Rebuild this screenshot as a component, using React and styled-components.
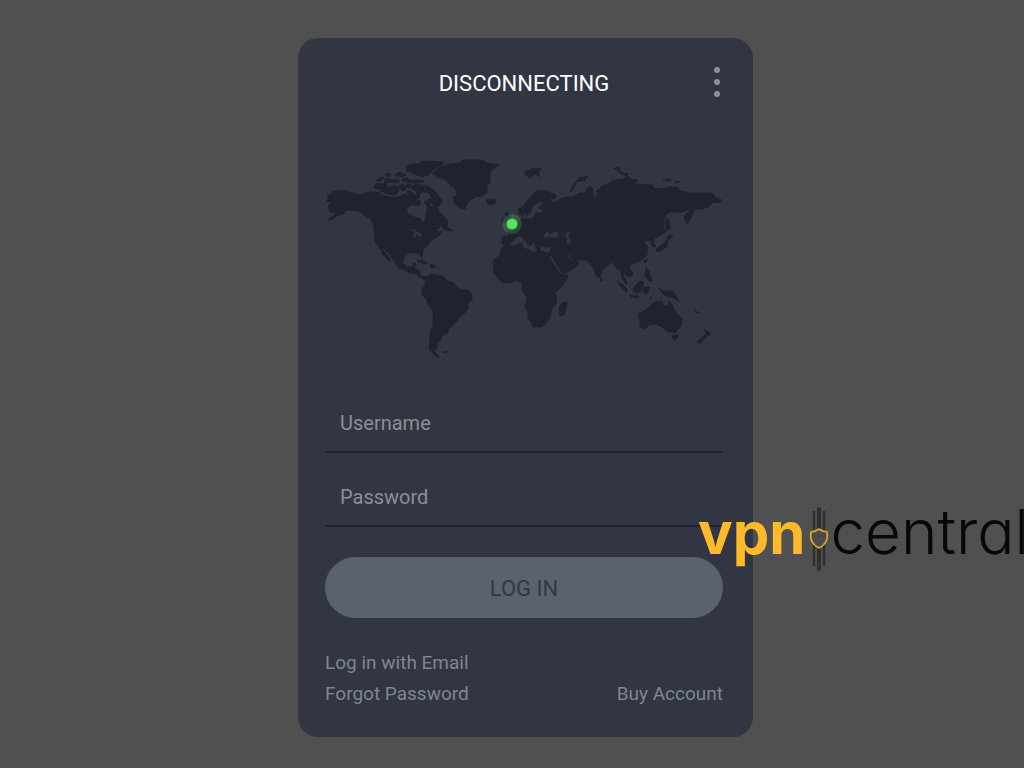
import React from 'react';
import styled, { createGlobalStyle } from 'styled-components';

const GlobalStyle = createGlobalStyle`
  *, *::before, *::after { box-sizing: border-box; }
  body {
    margin: 0;
    background: #505050;
    font-family: Roboto, "Liberation Sans", sans-serif;
  }
`;

const Page = styled.main`
  position: relative;
  min-height: 100vh;
  padding: 38px 0 31px 27px;
  display: flex;
  justify-content: center;
  align-items: flex-start;
  overflow: hidden;
`;

const Card = styled.section`
  width: 100%;
  max-width: 455px;
  padding: 24px 30px 31px 27px;
  border-radius: 20px;
  background: #323642;
`;

const Header = styled.header`
  display: grid;
  grid-template-columns: 32px 1fr 32px;
  align-items: center;
  height: 42px;
`;

const Title = styled.h1`
  grid-column: 2;
  margin: 0;
  padding-top: 2px;
  color: #fff;
  font-size: 22px;
  font-weight: 400;
  line-height: 28px;
  text-align: center;
`;

const MenuButton = styled.button`
  display: flex;
  flex-direction: column;
  align-items: center;
  gap: 6px;
  width: 20px;
  margin-left: 16px;
  padding: 0 0 2px;
  border: 0;
  background: none;
  cursor: pointer;
`;

const Dot = styled.span`
  width: 6px;
  height: 6px;
  border-radius: 50%;
  background: #8a919c;
`;

const MapDrawing = styled.svg`
  display: block;
  width: 100%;
  height: auto;
  margin: 51px 0 33px;
`;

const Form = styled.form`
  display: flex;
  flex-direction: column;
`;

const Field = styled.input`
  width: 100%;
  height: 60px;
  margin-bottom: 14px;
  padding: 2px 15px 0;
  border: 0;
  border-bottom: 2px solid #22242e;
  border-radius: 0;
  outline: 0;
  background: transparent;
  color: #fff;
  font: 400 20px/24px Roboto, "Liberation Sans", sans-serif;

  &::placeholder {
    color: #8b8f96;
    opacity: 1;
  }
`;

const LoginButton = styled.button`
  height: 61px;
  margin-top: 16px;
  padding: 2px 0 0;
  border: 0;
  border-radius: 31px;
  background: #5b626f;
  color: #343843;
  font: 400 22px/28px Roboto, "Liberation Sans", sans-serif;
  cursor: pointer;
`;

const Links = styled.nav`
  display: grid;
  grid-template-columns: 1fr auto;
  row-gap: 7px;
  margin-top: 33px;
`;

const TextLink = styled.a`
  grid-column: ${(p) => (p.$end ? 2 : 1)};
  justify-self: start;
  color: #7f868f;
  font-size: 19px;
  line-height: 24px;
  text-decoration: none;
`;

const Watermark = styled.div`
  position: absolute;
  top: 498px;
  right: 0;
  display: flex;
  align-items: flex-start;
  width: 326px;
  height: 76px;
  overflow: hidden;
  white-space: nowrap;
  font-family: Inter, "Liberation Sans", sans-serif;
  font-size: 58px;
  line-height: 70px;
  pointer-events: none;
`;

const BrandStrong = styled.span`
  color: #ffba2c;
  font-weight: 700;
`;

const BrandLight = styled.span`
  color: #080808;
  font-size: 62px;
  line-height: 68px;
  font-weight: 300;
  font-optical-sizing: none;
  font-feature-settings: "cv11";
`;

const ShieldMark = styled.svg`
  flex: none;
  width: 22px;
  height: 66px;
  margin: 7px 0 0 3px;
`;

const LAND = [
  // North and South America
  'M326 200.500L329 199 327 196 331 194 333 191 346 190.500 351 193 355 193 357 195 363 194 367 192 379 192 382 195 390 197 399 197 404 194 408 195 407 191 411 191 415 196 417 192 410 187 416 184 428 186 435 191 439 197 442 200 442 203 438 207 433 205 429 201 430 206 437 207 439 212 445 217 448 222 447 225 441 226 435 232 442 231 440 235 437 237 432 240 428 245 423 250 422 258 420 254 415 253 408 253 404 257 403 263 407 267 412 267 414 263 416 264 414 268 419 270 420 275 423 277 427 277 431 274 435 275 443 276 448 281 454 283 457 287 462 290 468 290 472 295 472 300 468 304 468 309 465 313 460 316 458 320 448 330 448 333 442 336 440 341 437 343 437 348 434 351 439 357 437 357.500 433 354 429 349 430 340 430 330 433 327 433 310 428 305 427 300 422 295 422 289 425 285 426 281 420 277 415 273 410 273 405 270 398 268 395 263 392 258 387 253 385 252 391 260 390 262 382 254 382 251 375 242 374 228 370 220 363 214 358 211 347 210 343 214 337 216 333 219 328 220 334 215 340 211 335 213 330 212 328 207 330 204 333 203Z',
  // Canadian Arctic
  'M406 167L410 164 418 164 423 161 444 162 443 164 437 167 428 175 422 177 415 174 407 171Z',
  'M380 191L381 188 386 186 391 187 394 185 398 187 399 191 395 195 387 194Z',
  'M374 186L377 183 383 184 387 183 385 187 378 189 374 188Z',
  'M377 179L381 177 384 178 381 181 377 181Z',
  'M385 176L387 173 391 174 390 176Z',
  'M384 180L388 178 391 180 397 179 400 181 396 183 390 182 385 183Z',
  'M395 175L399 172 403 174 406 175 403 177Z',
  'M401 180L406 178 411 180 423 180 424 182 414 183 407 182Z',
  'M399 186L403 184 407 187 404 191 400 189Z',
  'M407 184L411 184 410 188 407 187Z',
  // Greenland and the North Atlantic
  'M432 174L438 168 445 165 460 163 463 160 483 160 487 163 499 165 493 169 490 173 490 182 487 186 487 193 482 196 475 197 468 202 465 209 460 208 454 203 453 198 457 195 455 189 450 185 445 179 440 178Z',
  'M486 200L489 199 492 200 495 199 496 203 492 205 488 204Z',
  'M524 172L528 170 532 171 532 168 542 169 538 172 540 177 535 174 529 178 525 174Z',
  'M442 229L444 225 447 225 449 229 453 230 450 231Z',
  // Europe and Asia
  'M518 209L523 207 526 202 530 198 534 193 537 191 545 190.500 552 193 557 196 554 199 549 198 554 203 560 199 567 197 573 197 580 193 585 193 587 188 591 186 593 189 592 195 597 197 596 192 602 186 608 184 613 180 623 179 627 176 632 179 638 180 636 183 633 184 652 185 655 189 665 188 668 187 677 187 680 191 690 193 712 193 716 198 722 200 720 203 712 202 710 206 703 209 695 209 692 216 687 224 684 218 687 213 692 208 683 212 669 212 664 218 668 221 668 230 660 236 655 238 653 242 656 246 653 247 650 240 645 241 644 243 648 247 647 255 640 261 632 264 629 267 633 273 632 276 628 277 623 272 624 277 627 282 626 285 622 278 621 270 617 269 612 262 607 266 602 270 600 277 597 277 593 268 590 264 587 260 577 260 570 258 566 254 568 258 572 261 575 260 579 263 575 268 563 274 560 273 555 265 550 256 550 252 552 247 545 247 541 245 540 250 537 249 534 243 528 238 533 243 530 246 522 237 518 236 512 242 508 246 502 244 502 237 509 236 508 231 514 228 520 220 523 218 522 215 519 214Z',
  // Africa and Madagascar
  'M503 247L508 246 514 246 522 243 523 248 530 250 533 253 538 250 547 253 550 252 550 257 557 269 562 275 568 275 567 279 560 288 555 293 557 298 556 303 551 310 551 314 548 321 542 327 533 327 531 322 528 318 528 312 525 308 527 297 522 290 522 283 517 280 510 283 502 283 494 273 493 261 500 255 501 250Z',
  'M560 306L563 302 567 302 566 308 564 315 560 316 559 311Z',
  // Arctic islands north of Russia
  'M570 190L574 184 579 178 588 176 585 180 577 182 574 188 571 192Z',
  'M614 168L619 167 620 170 614 169ZM617 171L623 172 622 174ZM622 174L628 173 627 176ZM663 180L670 179 671 181ZM675 181L680 182 676 183Z',
  // Japan and South-East Asia
  'M656 249L662 245 666 241 668 236 673 235 671 238 668 240 667 247 662 250 657 252Z',
  'M643 261L648 259 645 263ZM646 267L649 271 651 277 652 281 649 281 645 276ZM617 280L623 285 628 290 626 292 620 286ZM633 288L640 281 644 282 642 290 638 293 634 292ZM644 287L650 287 648 292 646 294 643 292ZM629 295L638 296 639 298 631 297ZM649 299L652 297 650 300Z',
  'M658 288L664 291 671 291 675 294 679 301 674 298 665 296Z',
  'M600 277L603 280 601 282Z',
  'M666 219L669 219 670 229 667 229Z',
  // Caribbean and the South Atlantic
  'M417 261L423 260 428 263 425 264ZM430 265L433 264 436 267 431 268ZM443 352L447 351 446 353Z',
  // Australia and New Zealand
  'M638 314L646 310 654 302 662 301 664 306 668 306 669 301 672 304 674 310 682 319 681 326 675 333 668 332 662 327 656 324 649 325 645 329 640 327 640 321Z',
  'M672 336L678 335 677 339 674 340ZM693 309L699 313 698 314ZM704 329L708 332 711 334 706 337 700 344 697 342 702 337 706 334Z',
  // British Isles
  'M505 213L508 213 511 218 514 222 512 226 507 226ZM501 221L504 217 506 221 503 223Z',
];

const WATER = [
  // Hudson Bay and the Great Lakes
  'M420 195L423 192 429 193 431 197 428 200 424 202 427 207 426 212 425 218 423 223 420 218 415 217 408 213 407 209 411 205 415 206 421 205 420 200 415 201 420 198Z',
  'M409 230L415 229 417 232 421 233 422 236 419 237 417 234 415 238 413 236 415 231Z',
  // Baltic
  'M531 212L532 208 537 203 542 202 542 205 537 208 543 210 542 212 535 213 533 218 525 219 522 217 525 213 526 217Z',
  // Black Sea, Caspian and Aral
  'M544 235L547 231 550 234 557 231 559 236 556 238 551 237 544 238Z',
  'M564 235L569 231 570 234 568 236 571 240 570 244 567 243 567 238Z',
  'M569 254L571 256 569 257Z',
];

const WorldMap = () => (
  <MapDrawing viewBox="325 155 398 205" role="img" aria-label="World map">
    <path fill="#20222d" stroke="#20222d" strokeWidth=".8" strokeLinejoin="round" d={LAND.join('')} />
    <path fill="#323642" d={WATER.join('')} />
    <path fill="none" stroke="#323642" strokeWidth="1.800" d="M550 256L555 264 561 273" />
    <path fill="none" stroke="#323642" strokeWidth="1.300" d="M594 198L598 192M383 249L390 256M665 219V230M369 218L373 226" />
    <circle cx="512" cy="224" r="10" fill="#5be35f" fillOpacity=".2" />
    <circle cx="512" cy="224" r="7" fill="#45b84b" fillOpacity=".25" />
    <circle cx="512" cy="224" r="5.300" fill="#5be35f" />
  </MapDrawing>
);

const Brand = () => (
  <Watermark>
    <BrandStrong>vpn</BrandStrong>
    <ShieldMark viewBox="0 0 22 66" aria-hidden="true">
      <g stroke="#303030" strokeLinecap="round">
        <path strokeWidth="2.500" d="M6 7V60M16 7V60" />
        <path strokeWidth="4" d="M11 4V64" />
      </g>
      <path
        d="M11 24Q15 27 19 27Q21 38 11 43Q1 38 3 27Q7 27 11 24Z"
        fill="#4b4b4b"
        stroke="#e0a82f"
        strokeWidth="1.600"
        strokeLinejoin="round"
      />
    </ShieldMark>
    <BrandLight>central</BrandLight>
  </Watermark>
);

export default function App() {
  return (
    <>
      <GlobalStyle />
      <Page>
        <Card>
          <Header>
            <Title>DISCONNECTING</Title>
            <MenuButton type="button" aria-label="Menu">
              <Dot />
              <Dot />
              <Dot />
            </MenuButton>
          </Header>
          <WorldMap />
          <Form onSubmit={(e) => e.preventDefault()}>
            <Field type="text" placeholder="Username" aria-label="Username" />
            <Field type="password" placeholder="Password" aria-label="Password" />
            <LoginButton type="submit">LOG IN</LoginButton>
          </Form>
          <Links>
            <TextLink href="#email">Log in with Email</TextLink>
            <TextLink href="#forgot">Forgot Password</TextLink>
            <TextLink href="#buy" $end>Buy Account</TextLink>
          </Links>
        </Card>
        <Brand />
      </Page>
    </>
  );
}
